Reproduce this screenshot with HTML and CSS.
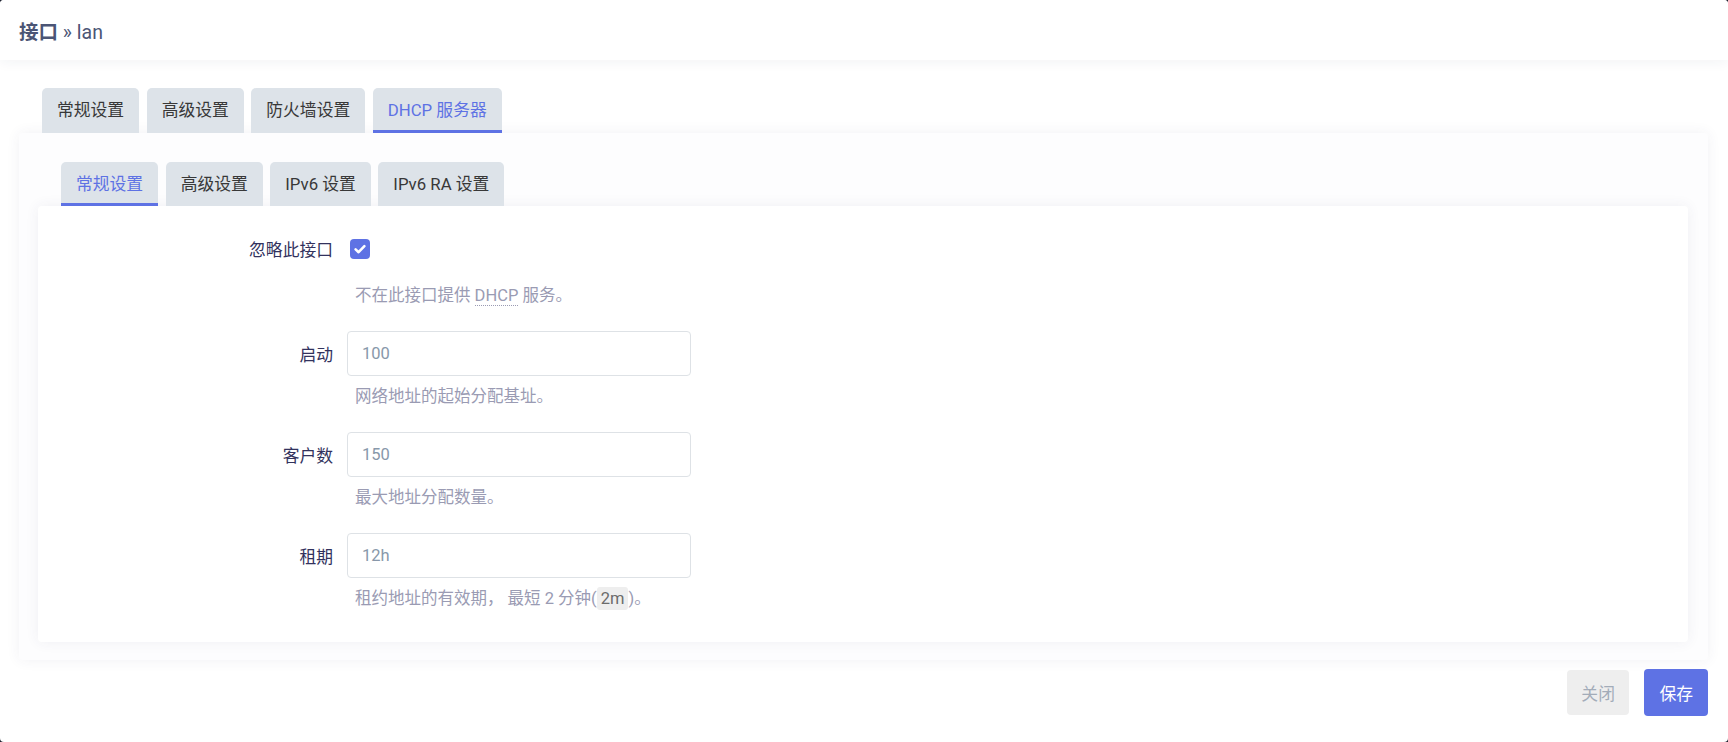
FILE: index.html
```html
<!DOCTYPE html>
<html lang="zh-CN">
<head>
<meta charset="utf-8">
<title>接口 » lan</title>
<link rel="stylesheet" href="styles.css">
</head>
<body>
<div class="modal">
  <header class="modal-head">
    <h3 class="title"><b>接口</b> » lan</h3>
  </header>
  <div class="modal-body">
    <ul class="tabs">
      <li class="tab">常规设置</li>
      <li class="tab">高级设置</li>
      <li class="tab">防火墙设置</li>
      <li class="tab active">DHCP 服务器</li>
    </ul>
    <div class="card outer">
      <ul class="tabs sub">
        <li class="tab active">常规设置</li>
        <li class="tab">高级设置</li>
        <li class="tab">IPv6 设置</li>
        <li class="tab">IPv6 RA 设置</li>
      </ul>
      <div class="card inner">
        <div class="field">
          <label class="field-label">忽略此接口</label>
          <div class="field-ctrl">
            <div class="check-wrap">
              <span class="checkbox"><svg viewBox="0 0 20 20" width="20" height="20"><path d="M5.6 10.4 L8.6 13.2 L14.4 7.2" fill="none" stroke="#fff" stroke-width="2.6" stroke-linecap="round" stroke-linejoin="round"/></svg></span>
            </div>
            <div class="help first">不在此接口提供 <abbr class="abbr">DHCP</abbr> 服务。</div>
          </div>
        </div>
        <div class="field">
          <label class="field-label">启动</label>
          <div class="field-ctrl">
            <input class="text" type="text" value="100">
            <div class="help">网络地址的起始分配基址。</div>
          </div>
        </div>
        <div class="field">
          <label class="field-label">客户数</label>
          <div class="field-ctrl">
            <input class="text" type="text" value="150">
            <div class="help">最大地址分配数量。</div>
          </div>
        </div>
        <div class="field last">
          <label class="field-label">租期</label>
          <div class="field-ctrl">
            <input class="text" type="text" value="12h">
            <div class="help">租约地址的有效期， 最短 2 分钟(<code class="code">2m</code>)。</div>
          </div>
        </div>
      </div>
    </div>
    <div class="actions">
      <button class="btn neutral">关闭</button>
      <button class="btn primary">保存</button>
    </div>
  </div>
</div>
</body>
</html>
```

FILE: styles.css
```css
* { box-sizing: border-box; }
html, body { margin: 0; padding: 0; }
body {
  background: #1e2230;
  font-family: Roboto, "Noto Sans CJK SC", sans-serif;
  font-size: 16.8px;
  color: #32325d;
}
.modal {
  height: 742px;
  background: #ffffff;
  border-radius: 4px;
  overflow: hidden;
}
.modal-head {
  height: 60px;
  display: flex;
  align-items: center;
  padding-left: 19px;
  background: #fff;
  box-shadow: 0 2px 12px rgba(40, 50, 90, 0.06);
  position: relative;
}
.title {
  margin: 0;
  font-size: 19.5px;
  font-weight: 400;
  color: #4b5575;
}
.title b { font-weight: 700; }
.modal-body {
  padding: 28px 20px 0 19px;
}
.tabs {
  list-style: none;
  margin: 0 0 0 23px;
  padding: 0;
  display: flex;
  gap: 7.5px;
}
.tab {
  height: 45px;
  line-height: 45px;
  padding: 0 15px;
  background: #dde3e9;
  border-radius: 5px 5px 0 0;
  color: #383838;
  font-size: 16.8px;
  white-space: nowrap;
}
.tab.active {
  color: #5e72e4;
  box-shadow: inset 0 -3px 0 #5e72e4;
}
.tabs.sub { margin-left: 23px; }
.tabs.sub .tab { height: 44px; line-height: 44px; }
.card {
  background: #fff;
  border-radius: 4px;
  box-shadow: 0 0 14px rgba(50, 60, 100, 0.07);
}
.card.outer {
  background: #fdfdfe;
  padding: 29px 20px 18px 19px;
}
.card.inner {
  background: #fff;
  padding: 20px 0 32px 0;
}
.field {
  display: grid;
  grid-template-columns: 295px 344px;
  column-gap: 14px;
  margin-bottom: 24px;
}
.field.last { margin-bottom: 0; }
.field-label {
  height: 45px;
  display: flex;
  align-items: center;
  justify-content: flex-end;
  color: #32325d;
  font-size: 16.8px;
}
.check-wrap {
  height: 45px;
  display: flex;
  align-items: center;
  padding-left: 3px;
}
.checkbox {
  width: 20px;
  height: 20px;
  border-radius: 4px;
  background: #5e72e4;
  display: block;
}
.checkbox svg { display: block; }
.text {
  display: block;
  width: 344px;
  height: 45px;
  border: 1px solid #dee2e6;
  border-radius: 4px;
  padding: 0 14px;
  font-family: Roboto, "Noto Sans CJK SC", sans-serif;
  font-size: 16.5px;
  color: #8898aa;
  background: #fff;
  outline: none;
}
.help {
  margin-top: 10px;
  line-height: 22px;
  padding-left: 8px;
  color: #9a9bb3;
  font-size: 16.5px;
}
.help.first { margin-top: 14px; }
.abbr {
  text-decoration: none;
  border-bottom: 1px dotted #9a9bb3;
}
.code {
  font-family: Roboto, "Noto Sans CJK SC", sans-serif;
  font-size: 16.5px;
  background: #eeeeee;
  color: #6b6b6b;
  padding: 2px 4px;
  border-radius: 3px;
}
.actions {
  display: flex;
  justify-content: flex-end;
  align-items: center;
  gap: 15px;
  margin-top: 9px;
}
.btn {
  height: 46px;
  padding: 0 15px;
  border: none;
  border-radius: 4px;
  font-family: Roboto, "Noto Sans CJK SC", sans-serif;
  font-size: 16.8px;
}
.btn.neutral {
  height: 45px;
  padding: 0 14.5px;
  background: #eeeeee;
  color: #a3acb9;
}
.btn.primary {
  height: 47px;
  background: #5e72e4;
  color: #fff;
}
```
